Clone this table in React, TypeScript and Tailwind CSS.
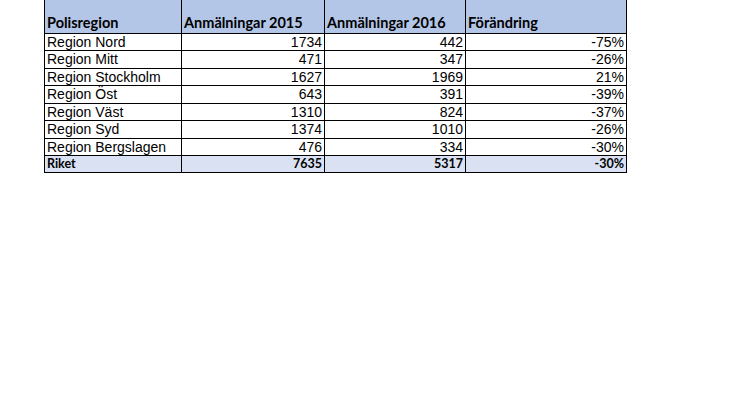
import React from 'react'

const rows = [
  { region: 'Region Nord', y2015: 1734, y2016: 442, change: '-75%' },
  { region: 'Region Mitt', y2015: 471, y2016: 347, change: '-26%' },
  { region: 'Region Stockholm', y2015: 1627, y2016: 1969, change: '21%' },
  { region: 'Region Öst', y2015: 643, y2016: 391, change: '-39%' },
  { region: 'Region Väst', y2015: 1310, y2016: 824, change: '-37%' },
  { region: 'Region Syd', y2015: 1374, y2016: 1010, change: '-26%' },
  { region: 'Region Bergslagen', y2015: 476, y2016: 334, change: '-30%' },
]

const calibri = 'font-["Lato","Open_Sans",sans-serif]'

export default function App() {
  return (
    <div className="w-[746px] h-[419px] bg-white pl-[44px]">
      <table className="border-collapse border-x-[1.5px] border-b-[1.5px] border-black text-black">
        <colgroup>
          <col className="w-[137px]" />
          <col className="w-[143px]" />
          <col className="w-[141px]" />
          <col className="w-[161px]" />
        </colgroup>
        <thead>
          <tr className={`h-[33px] bg-[#b4c6e7] ${calibri} text-[14.5px] font-bold leading-none`}>
            {['Polisregion', 'Anmälningar 2015', 'Anmälningar 2016', 'Förändring'].map((h) => (
              <th key={h} className="border-x border-b border-black px-[2px] pb-[2px] text-left align-bottom whitespace-nowrap">
                {h}
              </th>
            ))}
          </tr>
        </thead>
        <tbody className='font-["Liberation_Sans",Arial,sans-serif] text-[14px] leading-none'>
          {rows.map((r) => (
            <tr key={r.region} className="h-[17.5px]">
              <td className="border border-black px-[2px] text-left whitespace-nowrap">{r.region}</td>
              <td className="border border-black px-[2px] text-right">{r.y2015}</td>
              <td className="border border-black px-[2px] text-right">{r.y2016}</td>
              <td className="border border-black px-[2px] text-right">{r.change}</td>
            </tr>
          ))}
          <tr className={`h-[17px] bg-[#d9e1f2] ${calibri} text-[12.5px] font-bold`}>
            <td className="border border-black px-[2px] text-left">Riket</td>
            <td className="border border-black px-[2px] text-right">7635</td>
            <td className="border border-black px-[2px] text-right">5317</td>
            <td className="border border-black px-[2px] text-right">-30%</td>
          </tr>
        </tbody>
      </table>
    </div>
  )
}
